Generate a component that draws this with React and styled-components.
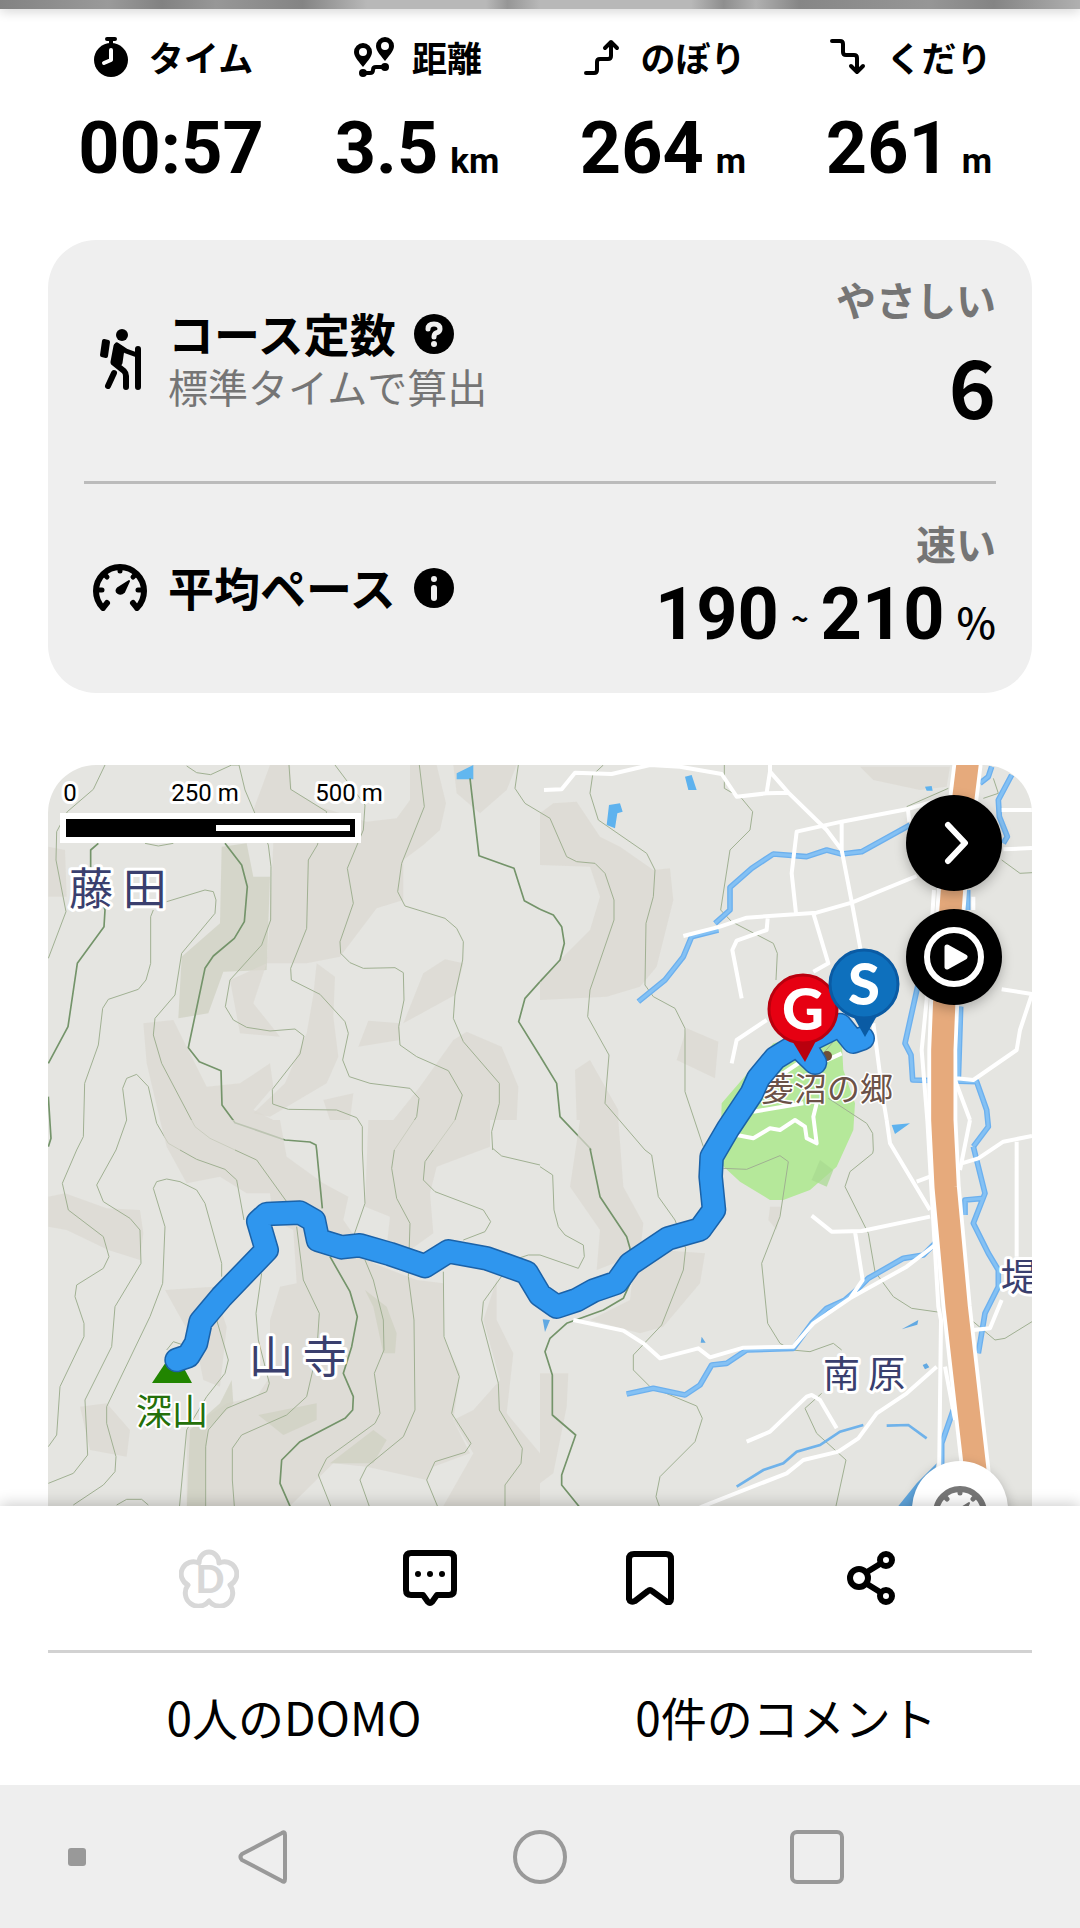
import React from "react";
import styled, { createGlobalStyle } from "styled-components";

function App() {
  return (
    <Page>
      <GlobalStyle />
      <Content>
        <Cover />
        <Stats>
          <Stat icon={<StopwatchIcon />} label="タイム" value="00:57" />
          <Stat icon={<RouteIcon />} label="距離" value="3.5" unit="km" />
          <Stat icon={<AscentIcon />} label="のぼり" value="264" unit="m" />
          <Stat icon={<DescentIcon />} label="くだり" value="261" unit="m" />
        </Stats>

        <Card>
          <Row>
            <RowIcon>
              <HikerIcon />
            </RowIcon>
            <RowText>
              <RowTitle>
                コース定数
                <HintButton aria-label="コース定数とは">
                  <QuestionIcon />
                </HintButton>
              </RowTitle>
              <RowSub>標準タイムで算出</RowSub>
            </RowText>
            <Result>
              <Grade>やさしい</Grade>
              <Score>6</Score>
            </Result>
          </Row>
          <Divider $color="#bbbbbb" />
          <Row>
            <RowIcon>
              <GaugeIcon />
            </RowIcon>
            <RowText>
              <RowTitle>
                平均ペース
                <HintButton aria-label="平均ペースとは">
                  <InfoIcon />
                </HintButton>
              </RowTitle>
            </RowText>
            <Result>
              <Grade>速い</Grade>
              <Pace>
                <Number>190</Number>
                <Tilde>~</Tilde>
                <Number>210</Number>
                <Percent>%</Percent>
              </Pace>
            </Result>
          </Row>
        </Card>

        <MapFrame>
          <CourseMap />
          <MapTools>
            <RoundButton aria-label="次へ">
              <svg width="30" height="48" viewBox="0 0 30 48">
                <path d="M9 6L26 24L9 42" {...line(6)} />
              </svg>
            </RoundButton>
            <RoundButton aria-label="再生">
              <svg width="60" height="60" viewBox="0 0 60 60">
                <circle cx="30" cy="30" r="27" {...line(6)} />
                <path
                  d="M23 20L41 30L23 40Z"
                  fill="currentColor"
                  stroke="currentColor"
                  strokeWidth="5"
                  strokeLinejoin="round"
                />
              </svg>
            </RoundButton>
          </MapTools>
          <PaceButton aria-label="ペース">
            <GaugeIcon />
          </PaceButton>
        </MapFrame>
      </Content>

      <Footer>
        <Actions>
          <ActionButton aria-label="DOMO" $muted>
            <DomoIcon />
          </ActionButton>
          <ActionButton aria-label="コメント">
            <CommentIcon />
          </ActionButton>
          <ActionButton aria-label="保存">
            <BookmarkIcon />
          </ActionButton>
          <ActionButton aria-label="共有">
            <ShareIcon />
          </ActionButton>
        </Actions>
        <Divider $color="#d2d2d2" />
        <Counts>
          <CountLink href="#domo">0人のDOMO</CountLink>
          <CountLink href="#comments">0件のコメント</CountLink>
        </Counts>
      </Footer>

      <NavBar>
        <NavDot />
        <NavButton aria-label="戻る">
          <svg width="54" height="54" viewBox="0 0 54 54">
            <path d="M46 3Q49 1 49 5V49Q49 53 46 51L6 30Q3 27 6 24Z" {...line(4)} />
          </svg>
        </NavButton>
        <NavButton aria-label="ホーム">
          <svg width="54" height="54" viewBox="0 0 54 54">
            <circle cx="27" cy="27" r="25" {...line(4)} />
          </svg>
        </NavButton>
        <NavButton aria-label="履歴">
          <svg width="54" height="54" viewBox="0 0 54 54">
            <rect x="2" y="2" width="50" height="50" rx="5" {...line(4)} />
          </svg>
        </NavButton>
      </NavBar>
    </Page>
  );
}

export default App;

function Stat({ icon, label, value, unit }) {
  return (
    <StatBox>
      <StatLabel>
        <StatIcon>{icon}</StatIcon>
        {label}
      </StatLabel>
      <StatValue>
        <Number>{value}</Number>
        {unit && <Unit>{unit}</Unit>}
      </StatValue>
    </StatBox>
  );
}

// shared attributes of outline icons
function line(width) {
  return {
    fill: "none",
    stroke: "currentColor",
    strokeWidth: width,
    strokeLinecap: "round",
    strokeLinejoin: "round",
  };
}

function StopwatchIcon() {
  return (
    <svg width="34" height="40" viewBox="0 0 34 40">
      <circle cx="17" cy="23" r="17" fill="currentColor" />
      <path d="M13 2H21M17 2V8" {...line(4)} />
      <path d="M17 13V23L10 26" fill="none" stroke="#fff" strokeWidth="4" strokeLinecap="round" strokeLinejoin="round" />
    </svg>
  );
}

function RouteIcon() {
  return (
    <svg width="40" height="40" viewBox="0 0 40 40">
      <path
        fill="currentColor"
        fillRule="evenodd"
        d="M9 6A9 9 0 0 1 18 15C18 20 12 26 9 30C6 26 0 20 0 15A9 9 0 0 1 9 6ZM9 11A4 4 0 1 0 9 19A4 4 0 1 0 9 11ZM31 0A9 9 0 0 1 40 9C40 14 34 20 31 24C28 20 22 14 22 9A9 9 0 0 1 31 0ZM31 5A4 4 0 1 0 31 13A4 4 0 1 0 31 5Z"
      />
      <circle cx="9" cy="36" r="4" fill="currentColor" />
      <circle cx="31" cy="30" r="4" fill="currentColor" />
      <path d="M9 36H16Q19 36 19 33T22 30H31" {...line(4)} />
    </svg>
  );
}

function AscentIcon() {
  return (
    <svg width="36" height="36" viewBox="0 0 36 36">
      <path d="M2 34H10Q13 34 13 31V23Q13 20 16 20H24Q27 20 27 17V3M21 9L27 3L33 9" {...line(4)} />
    </svg>
  );
}

function DescentIcon() {
  return (
    <svg width="36" height="36" viewBox="0 0 36 36">
      <path d="M2 2H10Q13 2 13 5V13Q13 16 16 16H24Q27 16 27 19V33M21 27L27 33L33 27" {...line(4)} />
    </svg>
  );
}

function HikerIcon() {
  return (
    <svg width="48" height="62" viewBox="0 0 48 62">
      <circle cx="26" cy="7" r="6" fill="currentColor" />
      <path d="M8 13L12 14L10 28L6 27Z" fill="currentColor" stroke="currentColor" strokeWidth="4" strokeLinejoin="round" />
      <path d="M20 18L26 21L24 35L17 34Z" fill="currentColor" stroke="currentColor" strokeWidth="5" strokeLinejoin="round" />
      <path d="M21 17L30 23L41 27" {...line(5)} />
      <path d="M18 35L28 43Q30 45 30 48V59M18 45L12 58M42 21V59" {...line(6)} />
    </svg>
  );
}

function GaugeIcon() {
  return (
    <svg width="54" height="48" viewBox="0 0 54 48">
      <path d="M10 45A24 24 0 1 1 44 45M10 45L14 40M44 45L40 40" {...line(6)} />
      <path d="M5 27H9M49 27H45M27 4V8M12 12L14 14M42 12L40 14" {...line(5)} />
      <path d="M36 18L31 29Q28 32 25 30T25 25Z" fill="currentColor" stroke="currentColor" strokeWidth="2" strokeLinejoin="round" />
    </svg>
  );
}

function QuestionIcon() {
  return (
    <svg width="40" height="40" viewBox="0 0 40 40">
      <circle cx="20" cy="20" r="20" fill="currentColor" />
      <path d="M14 15Q14 10 20 10T26 15Q26 18 22 19Q20 20 20 23" fill="none" stroke="#efefef" strokeWidth="5" strokeLinecap="round" />
      <circle cx="20" cy="30" r="3" fill="#efefef" />
    </svg>
  );
}

function InfoIcon() {
  return (
    <svg width="40" height="40" viewBox="0 0 40 40">
      <circle cx="20" cy="20" r="20" fill="currentColor" />
      <circle cx="20" cy="11" r="3" fill="#efefef" />
      <path d="M20 20V30" stroke="#efefef" strokeWidth="6" strokeLinecap="round" />
    </svg>
  );
}

function DomoIcon() {
  return (
    <svg width="60" height="60" viewBox="0 0 60 60">
      <path
        d="M20 15A10 11 0 0 1 40 15A12 12 0 0 1 51 37A13 13 0 0 1 30 53A13 13 0 0 1 9 37A12 12 0 0 1 20 15Z"
        {...line(5)}
      />
      <text x="31" y="45" textAnchor="middle" fontFamily="Lato, sans-serif" fontWeight="900" fontSize="38" fill="currentColor">
        D
      </text>
    </svg>
  );
}

function CommentIcon() {
  return (
    <svg width="54" height="56" viewBox="0 0 54 56">
      <path d="M8 3H46Q51 3 51 8V40Q51 45 46 45H34L29 52Q27 54 25 52L20 45H8Q3 45 3 40V8Q3 3 8 3Z" {...line(6)} />
      <circle cx="15" cy="24" r="3" fill="currentColor" />
      <circle cx="27" cy="24" r="3" fill="currentColor" />
      <circle cx="39" cy="24" r="3" fill="currentColor" />
    </svg>
  );
}

function BookmarkIcon() {
  return (
    <svg width="48" height="54" viewBox="0 0 48 54">
      <path d="M8 3H40Q45 3 45 8V48Q45 52 41 51L26 40Q24 38 22 40L9 50Q4 52 3 48V8Q3 3 8 3Z" {...line(6)} />
    </svg>
  );
}

function ShareIcon() {
  return (
    <svg width="48" height="54" viewBox="0 0 48 54">
      <circle cx="12" cy="27" r="9" {...line(6)} />
      <circle cx="39" cy="9" r="6" {...line(6)} />
      <circle cx="39" cy="45" r="6" {...line(6)} />
      <path d="M20 21L33 13M20 33L33 41" {...line(6)} />
    </svg>
  );
}

const MAJOR = { stroke: "#74946a", strokeWidth: 5 };

// Terrain is stored as four tiles, three units to a pixel.
function Tile({ col = 0, row = 0, children }) {
  return <g transform={`translate(${40 + col * 500} ${750 + row * 370}) scale(0.33333)`}>{children}</g>;
}

function Land({ d, fill = "#dcd9d1" }) {
  return <path d={d} fill={fill} opacity="0.7" />;
}

function Contours({ children }) {
  return (
    <g fill="none" stroke="#a0b092" strokeWidth="3" strokeLinejoin="round">
      {children}
    </g>
  );
}

function Streams({ d }) {
  return (
    <g fill="none" strokeLinejoin="round">
      <path d={d} stroke="#6cb0ee" strokeWidth="17" />
      <path d={d} stroke="#84c1f4" strokeWidth="9" />
    </g>
  );
}

function Roads({ d }) {
  return <path d={d} fill="none" stroke="#fff" strokeWidth="12" strokeLinejoin="round" />;
}

function Highway({ d }) {
  return (
    <g fill="none" strokeLinejoin="round">
      <path d={d} stroke="#fff" strokeWidth="90" />
      <path d={d} stroke="#e6aa7c" strokeWidth="67" />
    </g>
  );
}

function Pin({ x, y, tip, letter, color, edge }) {
  return (
    <g>
      <path d={`M${x - 12} ${y + 30}L${x + tip} ${y + 53}L${x + 14} ${y + 30}Z`} fill={edge} />
      <circle cx={x} cy={y} r="34" fill={color} stroke={edge} strokeWidth="3" />
      <text x={x} y={y + 21} textAnchor="middle" fontFamily="Lato, sans-serif" fontWeight="900" fontSize="58" fill="#fff">
        {letter}
      </text>
    </g>
  );
}

const COURSE =
  "M410 1830L445 1818L468 1780L482 1715L545 1640L622 1560L680 1500L655 1415L680 1392L780 1388L822 1412L834 1470L905 1492L960 1486L1050 1512L1155 1548L1225 1504L1340 1525L1460 1568L1500 1635L1550 1670L1610 1650L1660 1622L1730 1598L1770 1542L1885 1465L1980 1438L2022 1380L2012 1280L2015 1220L2065 1135L2135 1030L2155 985L2205 925L2270 885L2325 938L2290 880L2400 825L2440 875L2468 865";

function CourseMap() {
  return (
    <MapSvg viewBox="48 765 984 822" preserveAspectRatio="xMidYMin slice">
      <rect x="48" y="765" width="984" height="822" fill="#e5e5e1" />
      <Tile>
        <Land d="M1110 45H1190L1218 160L1200 240L1150 285L1090 330V450L1010 475L900 620L800 640H680L690 500L700 280L640 180L690 45H750L755 120L840 170L980 215L1070 205L1110 150Z" />
        <Land d="M1240 45H1430L1400 120L1320 190L1250 130Z" />
        <Land d="M540 520L545 290L620 280L640 380H690L680 660L550 665L505 790L415 805L425 620Z" fill="#cfd0c1" />
        <Land d="M1090 820L1150 670L1215 628L1270 640L1245 735ZM955 890L985 812L1080 820V870Z" />
        <Land d="M1240 870L1280 845L1385 890L1435 1010L1430 1110H1060L1140 1010Z" />
        <Land d="M830 640L885 680L880 800L895 920L860 1000L690 1100L640 1090L735 1000L800 850L820 735Z" />
        <Land d="M310 820L400 810L440 890L500 1010L600 1000L690 940L700 1010L640 1080L700 1110H360L320 940Z" />
        <Land d="M570 690L680 640L640 760L720 860L600 850ZM25 290L75 300L80 440H25ZM850 1050L940 1030L930 1110H870Z" />
        <path d="M1250 70L1300 45V88H1250Z" fill="#62b7ef" />
        <Contours>
          <path d="M195 45L160 118L82 185L50 245L48 330L78 485L25 625M380 455L495 420L520 425L528 450L525 490L425 610L405 735L345 805L340 855L365 940L465 1130L510 1165L585 1200" />
          <path d="M340 480L332 500V640L318 690L295 718L205 748L188 775L175 885L134 1000L130 1160L110 1200M440 48L470 68L512 74L575 45H597L615 120L685 285L693 350L692 510L665 585L570 690L556 770L580 810L620 832L690 843L765 837L792 858L780 912L697 1018L698 1062L745 1078L890 1080L950 1103L967 1130V1200" />
          <path d="M747 45L752 118L860 185L832 285L805 330L800 535L752 655L754 690L840 733L915 815L925 850L908 930L928 980L990 1000L1110 1015L1137 1045L1130 1100L1063 1200" />
          <path d="M885 45L975 165L970 240L922 355L940 460L900 575L902 610L930 638L970 655L1065 653L1090 668L1092 750L1076 830L1080 885L1130 920L1225 962L1267 1035L1245 1110L1180 1200" />
          <path d="M1138 45L1153 170L1085 340L1073 425L1095 468L1215 505L1250 535L1270 575L1268 630L1245 735L1240 805L1270 875L1378 1000V1060L1355 1145L1358 1200M1435 45L1425 115L1455 160L1500 187" />
          <path d="M228 1200L260 1110L248 1015L260 985L290 973L325 1010L350 1120L385 1180L420 1200M315 280L355 288L400 280" />
          <path d="M175 280L152 300V350L195 480L192 530L112 640L84 830L25 940M25 1040L33 1165L25 1190M555 280L605 345L622 410L613 515L583 565L520 618L495 655L445 893L478 935L543 962L546 1065L585 1118L735 1170L810 1176L828 1185L830 1200" {...MAJOR} />
          <path d="M1290 85L1317 317L1422 355L1453 452L1500 478M1500 695L1455 745L1436 815L1500 918" {...MAJOR} />
        </Contours>
      </Tile>

      <Tile col={1}>
        <Land d="M960 50H1230L1220 110L1140 120L1000 90ZM0 190L40 160L110 155L180 260L240 290L340 360L390 355L400 450L350 650L300 710L200 740L0 750V690L70 620L150 540L180 440L150 350L0 345Z" />
        <Land d="M440 835L535 875L525 985L410 930ZM105 960L150 930L235 1080V1110H110Z" />
        <path d="M700 880L880 840L905 870L910 960L945 1060L940 1140L890 1250L810 1320L730 1350H690L600 1295L540 1240L545 1060Z" fill="#b5e89a" />
        <Contours>
          <path d="M190 45L158 75L150 130L175 210L320 310L345 360L340 440L318 520L315 705L340 740L405 775L435 835V1025L490 1190M0 187L30 205L80 320L110 335L165 340L195 370L222 450V510L150 720L143 800L207 915L195 1060L315 1200" />
          <path d="M553 45V115L605 145L638 185L630 240L570 300L542 480L575 515L700 580L712 610L708 690M865 1045L980 1120L998 1150L1000 1200M1385 330L1440 370L1476 368M1360 85L1375 130L1330 145M1100 170L1225 115M910 840L850 910" />
          <path d="M0 478L40 495L65 530L73 580L60 630L0 695M0 918L50 1000L60 1100L155 1200" {...MAJOR} />
        </Contours>
        <Streams d="M1110 225L965 305L905 312L860 300L800 320L700 312L635 355L570 412V480L525 520M535 540L455 560L430 620L375 690L295 755M1355 50L1345 80L1320 100M1415 75L1375 150L1378 200L1402 260L1390 280M1135 700L1095 880L1113 915L1118 990L1310 995L1340 1080L1345 1130L1300 1190M1262 770L1255 990M1283 420V480" />
        <path d="M435 80L455 75L470 120L445 120ZM207 165L240 160L248 185L232 190L225 235L200 225ZM1155 110L1175 108L1178 122L1160 122ZM1055 1125L1110 1120L1065 1152Z" fill="#5eb2ee" />
        <Roads d="M12 120L65 118L105 68L215 72L330 45L420 50L545 72L590 140L680 130L745 128M690 45V65L680 128M690 65L745 128L860 240L905 300L935 455L962 600M1230 140L1100 178L905 215L770 245L755 370L768 490M905 210V300M1130 378L935 458L830 488L620 503L540 530L430 558" />
        <Roads d="M820 490L865 640L820 665M683 505L680 540L590 572L577 600L605 745M680 810L590 870L575 940M1104 180L1108 215M1385 180H1476M1390 298L1476 294M1182 420L1160 750L1145 900L1162 1110M1245 770V990L1290 1110M1385 718L1476 732L1440 840L1430 900L1300 990L1250 985M1000 820L1030 1050L1040 1110M1300 440V480" />
        <Roads d="M590 1155L640 1165L690 1135L720 1140L765 1110L795 1130L800 1165L830 1180L820 1100L830 1060M640 1085L790 1060M790 930L700 990M905 910L840 940" />
      </Tile>

      <Tile row={1}>
        <Land d="M360 0H720L740 110L850 190L925 230L910 300L1000 430L1130 480L1210 490V650L1260 760L1240 900L1290 1000L1180 1040L1160 1080L980 1040L880 1030L750 1158V1250H440V930L560 850L650 830L690 770V600L720 500L770 490L760 330L700 300L690 220H620L540 170L440 190L380 80Z" />
        <Land d="M25 230L75 220L200 265L300 270L310 340L300 420L205 390L80 330L25 320ZM120 860L200 850L270 930L260 1010L150 990ZM375 510L520 500L560 620L540 800L490 780L470 680Z" />
        <Land d="M575 780L580 850L500 930L495 1180H440L450 930L540 850ZM655 885L830 850V900L730 945ZM975 510L1040 560L1070 640L1065 700H1030L1000 560ZM870 1030L1000 930L1040 960L1000 1030Z" fill="#cfd0c1" />
        <Land d="M1370 480L1330 600L1380 780L1300 870L1240 900L1300 1000L1210 1158V1250H1500V1000L1400 880L1420 700L1370 600ZM985 0H1350V80L1190 140L1170 220L1180 340L1110 390L1040 380L1050 290L975 260Z" />
        <Contours>
          <path d="M110 90L67 190L85 270L190 350L207 410L190 445L110 495L105 530L132 610V650L60 800L50 945L25 980M228 90L170 195L190 245L270 295L300 330L303 430L225 560L215 680L135 840L143 1005L100 1060L25 1090M420 90L470 118L555 148L590 180L612 300M585 90L650 120L740 245M967 90L975 250L942 345M975 420L1000 480L1030 600L1032 690L1003 760L1020 880L1005 910L860 1015L835 1065L872 1158L910 1250" />
          <path d="M1063 90L1055 145L1070 235L1110 310L1105 470L1122 600L1125 870L1090 950L980 1040L960 1080L1020 1250M1180 90L1155 125L1150 180L1185 215L1330 270L1352 305L1335 335L1270 360M1210 455L1212 650L1258 770L1235 880L1293 970L1275 997L1185 1025L1160 1080L1230 1250M1358 85L1385 108L1500 135M1500 405H1465L1420 420L1330 545L1325 600L1375 790L1378 870L1447 985L1443 1030L1395 1095V1250" />
          <path d="M545 470V430L495 250L470 210L420 185L380 177L350 185L340 205L375 320L368 490L330 590L200 860V910L228 1010L225 1055L190 1095L100 1155M530 600L565 720L555 760L500 830L440 930L410 1250M665 460L648 580L655 660L688 790L680 815L560 865L505 930L497 980V1250M770 320L790 480L838 580L830 700L800 830L740 885L605 945L577 985V1080L590 1250M230 1155L260 1138H305L325 1155M380 690L400 665L430 675" />
          <path d="M830 90L847 265M870 410L930 515L952 590L935 680L910 760L940 830L938 870L915 895L780 965L725 1020L720 1090L790 1250" {...MAJOR} />
        </Contours>
      </Tile>

      <Tile col={1} row={1}>
        <Land d="M120 0H235L250 200L310 310L300 400L170 450L180 330L90 200ZM360 390L495 400L480 490L370 620L300 640L150 600L270 540L280 450ZM0 760H85L80 860L40 1060L0 1090ZM690 260H725L710 330L685 300Z" />
        <Land d="M840 120L880 150L860 200L815 180Z" fill="#a8da90" />
        <Contours>
          <path d="M0 140L38 165L42 270L55 320L75 345L130 375L133 410L115 445L0 405M315 90L335 105L355 230L405 300L437 385L430 450L365 615L280 705V750L330 800L470 858L487 895L465 965L360 1070L348 1130L390 1250M550 145L620 148L720 107L745 125L720 290L665 430L683 610L720 670L755 690L810 695L880 670L905 690" />
          <path d="M1000 90L998 100L930 155L915 200L985 340L1005 455L1060 530L1115 565L1200 577M845 820L795 865L830 940L918 1020L888 1158V1250M1300 605L1365 660L1395 655L1476 605" />
          <path d="M150 85L180 230L260 350L270 385V490L250 535L190 570L80 610L30 655L15 695L37 765V885L107 945L65 1065V1095L150 1200" {...MAJOR} />
        </Contours>
        <Streams d="M1300 80L1335 220L1300 310L1345 400L1375 450V500L1335 580L1315 700M1330 235L1275 240V285M1185 370L1150 405L1090 415L985 475L950 510L915 540L860 565L815 610L760 685L620 690L560 730L515 735L480 795L435 825L340 805L260 822M1240 870L1205 970V1040" />
        <path d="M970 915L900 935L840 975L770 995L730 1030L670 1050L590 1100M1040 917L1105 915L1160 955" fill="none" stroke="#6fb2ea" strokeWidth="8" />
        <path d="M1085 628L1135 600L1132 614ZM1148 735L1160 730L1168 742L1155 748ZM485 650L497 668H482ZM8 598L30 600L15 636ZM1075 1158L1130 1090L1190 1030L1140 1250Z" fill="#62a9e2" />
        <Roads d="M1040 0L1050 70L1170 270M1130 185L1170 170M815 287L875 335L965 333L1170 290M945 335L968 480L930 535M1185 375L1100 440L930 535L820 610L760 680L610 683L510 712L475 685L360 715L310 670L250 632L100 600" />
        <Roads d="M620 965L690 935L800 830L815 825L840 840L890 925M1190 740L1100 820L1010 880L955 955L895 995L790 1020L740 1060L490 1158L300 1250M1162 0L1195 560L1203 600L1195 1250M1290 0L1260 150M1265 130L1315 115L1390 65L1476 48M1430 65V410M1300 630L1350 625L1385 540M1215 740L1245 900" />
      </Tile>

      <Tile col={1}>
        <Highway d="M1283 40L1236 420L1215 700L1207 900V1110L1217 1310L1250 1670L1305 2150L1325 2360" />
      </Tile>

      <path d="M152 1383H192L174 1350Z" fill="#218500" />
      <circle cx="827" cy="1056" r="5" fill="#6e5038" />
      <PoiLabel x="761" y="1101">菱沼の郷</PoiLabel>
      <Tile>
        <g fill="none" strokeLinecap="round" strokeLinejoin="round">
          <path d={COURSE} stroke="#1b62a8" strokeWidth="74" />
          <path d={COURSE} stroke="#2f96ee" strokeWidth="65" />
        </g>
      </Tile>
      <Pin x={803} y={1009} tip={2} letter="G" color="#e60012" edge="#b9000e" />
      <Pin x={864} y={984} tip={1} letter="S" color="#0e70bd" edge="#0a5ba4" />

      <TownLabel x="69" y="905">藤 田</TownLabel>
      <TownLabel x="249" y="1373">山 寺</TownLabel>
      <TownLabel x="823" y="1388" $small>南 原</TownLabel>
      <TownLabel x="1001" y="1291" $small>堤</TownLabel>
      <PeakLabel x="136" y="1425">深山</PeakLabel>

      <rect x="60" y="813" width="301" height="30" fill="#fff" />
      <rect x="66" y="819" width="289" height="18" />
      <rect x="216" y="825" width="134" height="6" fill="#fff" />
      <ScaleLabel x="70" y="801">0</ScaleLabel>
      <ScaleLabel x="205" y="801">250 m</ScaleLabel>
      <ScaleLabel x="349" y="801">500 m</ScaleLabel>
    </MapSvg>
  );
}

const GlobalStyle = createGlobalStyle`
  * {
    box-sizing: border-box;
  }

  body {
    margin: 0;
    background: #fff;
    color: #000;
    font-family: "Noto Sans CJK JP", sans-serif;
  }

  button {
    display: flex;
    align-items: center;
    justify-content: center;
    padding: 0;
    border: 0;
    background: none;
    color: inherit;
    cursor: pointer;
  }

  svg {
    display: block;
  }
`;

const Page = styled.div`
  display: flex;
  flex-direction: column;
  height: 100vh;
`;

const Content = styled.main`
  flex: 1;
  min-height: 0;
  overflow: hidden;
`;

const Cover = styled.div`
  height: 9px;
  background: linear-gradient(
    90deg,
    #828282,
    #9a9a9a 10%,
    #828282 15%,
    #979797 20%,
    #848484 28%,
    #b8b8b8 34%,
    #b8b8b8 45%,
    #969696 47%,
    #b8b8b8 50%,
    #b8b8b8 64%,
    #8e8e8e 67%,
    #b0b0b0 70%,
    #868686 74%,
    #969696 86%,
    #848484 92%,
    #b0b0b0
  );
  box-shadow: 0 2px 12px rgba(0, 0, 0, 0.2);
`;

const Stats = styled.section`
  display: grid;
  grid-template-columns: repeat(4, 1fr);
  padding: 26px 48px 49px;
`;

const StatBox = styled.div`
  display: flex;
  flex-direction: column;
  align-items: center;
  gap: 28px;
`;

const StatLabel = styled.div`
  display: flex;
  align-items: center;
  gap: 16px;
  height: 44px;
  font-size: 35px;
  font-weight: 700;
  line-height: 40px;
`;

const StatIcon = styled.span`
  display: flex;
  justify-content: center;
  width: 44px;
`;

const StatValue = styled.div`
  display: flex;
  align-items: baseline;
  gap: 12px;
  height: 84px;
`;

const Number = styled.span`
  font-family: Roboto, sans-serif;
  font-size: 72px;
  font-weight: 700;
  line-height: 84px;
`;

const Unit = styled.span`
  font-family: Roboto, sans-serif;
  font-size: 35px;
  font-weight: 700;
`;

const Card = styled.section`
  margin: 0 48px 72px;
  padding: 0 36px;
  border-radius: 48px;
  background: #efefef;
`;

const Row = styled.div`
  display: flex;
  align-items: center;
  gap: 24px;
  padding: 32px 0 33px 12px;
`;

const RowIcon = styled.div`
  display: flex;
  justify-content: center;
  width: 48px;
  padding-bottom: 2px;

  svg {
    flex: none;
  }
`;

const RowText = styled.div`
  flex: 1;
  padding-bottom: 4px;
`;

const RowTitle = styled.h2`
  display: flex;
  align-items: center;
  gap: 18px;
  margin: 0;
  font-size: 46px;
  font-weight: 700;
  line-height: 56px;
`;

const HintButton = styled.button`
  width: 40px;
  height: 40px;
  margin-top: 4px;
`;

const RowSub = styled.p`
  margin: 0;
  color: #757575;
  font-size: 40px;
  line-height: 52px;
`;

const Result = styled.div`
  display: flex;
  flex-direction: column;
  align-items: flex-end;
`;

const Grade = styled.div`
  color: #757575;
  font-size: 40px;
  font-weight: 700;
  line-height: 54px;
`;

const Score = styled.div`
  padding-bottom: 6px;
  font-size: 80px;
  font-weight: 700;
  line-height: 116px;
`;

const Pace = styled.div`
  display: flex;
  align-items: baseline;
  height: 90px;
  padding-top: 3px;
`;

const Tilde = styled.span`
  align-self: center;
  margin: 0 12px;
  font-size: 30px;
  font-weight: 700;
  line-height: 40px;
`;

const Percent = styled.span`
  margin-left: 12px;
  font-size: 42px;
  font-weight: 500;
  line-height: 56px;
`;

const Divider = styled.hr`
  height: 3px;
  margin: 0;
  border: 0;
  background: ${({ $color }) => $color};
`;

const MapFrame = styled.section`
  position: relative;
  height: 822px;
  margin: 0 48px;
  border-radius: 48px;
  overflow: hidden;
`;

const MapSvg = styled.svg`
  width: 100%;
  height: 100%;
`;

const MapLabel = styled.text`
  stroke: #fff;
  stroke-width: 6px;
  stroke-linejoin: round;
  paint-order: stroke;
`;

const TownLabel = styled(MapLabel)`
  fill: #3a3f6e;
  font-size: ${({ $small }) => ($small ? 37 : 44)}px;
`;

const PeakLabel = styled(MapLabel)`
  fill: #24700a;
  font-size: 36px;
  stroke-width: 4px;
`;

const PoiLabel = styled(MapLabel)`
  fill: #6b5248;
  font-size: 33px;
  stroke-width: 3px;
`;

const ScaleLabel = styled(MapLabel)`
  fill: #000;
  font-family: Roboto, sans-serif;
  font-size: 24px;
  text-anchor: middle;
`;

const MapTools = styled.div`
  position: absolute;
  top: 30px;
  right: 30px;
  display: flex;
  flex-direction: column;
  gap: 18px;
`;

const RoundButton = styled.button`
  width: 96px;
  height: 96px;
  border-radius: 50%;
  background: #000;
  color: #fff;
  box-shadow: 0 4px 12px rgba(0, 0, 0, 0.25);
`;

const PaceButton = styled(RoundButton)`
  position: absolute;
  right: 24px;
  bottom: 30px;
  background: #fff;
  color: #777;
`;

const Footer = styled.footer`
  position: relative;
  padding: 0 48px;
  background: #fff;
  box-shadow: 0 -2px 14px rgba(0, 0, 0, 0.2);
`;

const Actions = styled.div`
  display: grid;
  grid-template-columns: repeat(4, 1fr);
  height: 144px;
  padding: 0 51px;
`;

const ActionButton = styled.button`
  height: 144px;
  color: ${({ $muted }) => ($muted ? "#d8d8d8" : "#000")};
`;

const Counts = styled.div`
  display: grid;
  grid-template-columns: 1fr 1fr;
  padding-bottom: 6px;
`;

const CountLink = styled.a`
  color: #000;
  font-size: 46px;
  line-height: 126px;
  text-align: center;
  text-decoration: none;
`;

const NavBar = styled.nav`
  position: relative;
  display: grid;
  grid-template-columns: 124px 1fr 1fr 1fr 124px;
  align-items: center;
  height: 143px;
  background: #eeeeee;
  color: #999;
`;

const NavDot = styled.span`
  width: 18px;
  height: 18px;
  margin-left: 68px;
  border-radius: 3px;
  background: #999;
`;

const NavButton = styled.button`
  height: 100%;
`;
